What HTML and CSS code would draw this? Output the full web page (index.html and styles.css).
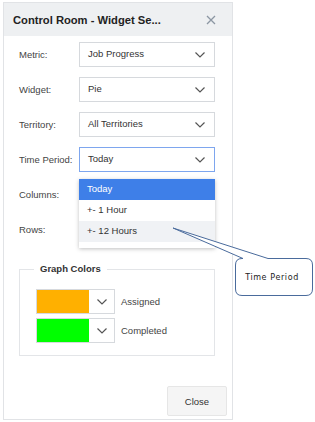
FILE: index.html
```html
<!DOCTYPE html>
<html lang="en">
<head>
  <meta charset="UTF-8">
  <meta name="viewport" content="width=device-width, initial-scale=1">
  <title>Control Room - Widget Settings</title>
  <link rel="stylesheet" href="styles.css">
</head>
<body>

  <div class="dialog">
    <div class="dialog-header">
      <span class="dialog-title">Control Room - Widget Se...</span>
      <svg class="close-icon" width="10" height="10" viewBox="0 0 10 10">
        <path d="M1 1 L9 9 M9 1 L1 9" stroke="#8c96a3" stroke-width="1.3" fill="none"/>
      </svg>
    </div>

    <div class="dialog-body">
      <div class="field">
        <label>Metric:</label>
        <div class="select">
          <span>Job Progress</span>
          <svg class="chevron" width="10" height="6" viewBox="0 0 10 6"><path d="M0.5 0.5 L5 5 L9.5 0.5" stroke="#555" stroke-width="1.2" fill="none"/></svg>
        </div>
      </div>

      <div class="field">
        <label>Widget:</label>
        <div class="select">
          <span>Pie</span>
          <svg class="chevron" width="10" height="6" viewBox="0 0 10 6"><path d="M0.5 0.5 L5 5 L9.5 0.5" stroke="#555" stroke-width="1.2" fill="none"/></svg>
        </div>
      </div>

      <div class="field">
        <label>Territory:</label>
        <div class="select">
          <span>All Territories</span>
          <svg class="chevron" width="10" height="6" viewBox="0 0 10 6"><path d="M0.5 0.5 L5 5 L9.5 0.5" stroke="#555" stroke-width="1.2" fill="none"/></svg>
        </div>
      </div>

      <div class="field">
        <label>Time Period:</label>
        <div class="select open">
          <span>Today</span>
          <svg class="chevron" width="10" height="6" viewBox="0 0 10 6"><path d="M0.5 0.5 L5 5 L9.5 0.5" stroke="#555" stroke-width="1.2" fill="none"/></svg>
          <ul class="dropdown">
            <li class="selected">Today</li>
            <li>+- 1 Hour</li>
            <li class="hover">+- 12 Hours</li>
          </ul>
        </div>
      </div>

      <div class="field">
        <label>Columns:</label>
        <div class="select"></div>
      </div>

      <div class="field">
        <label>Rows:</label>
        <div class="select"></div>
      </div>

      <fieldset class="colors">
        <legend>Graph Colors</legend>
        <div class="color-row">
          <div class="picker">
            <div class="swatch orange"></div>
            <div class="picker-btn">
              <svg width="10" height="6" viewBox="0 0 10 6"><path d="M0.5 0.5 L5 5 L9.5 0.5" stroke="#555" stroke-width="1.2" fill="none"/></svg>
            </div>
          </div>
          <span>Assigned</span>
        </div>
        <div class="color-row">
          <div class="picker">
            <div class="swatch green"></div>
            <div class="picker-btn">
              <svg width="10" height="6" viewBox="0 0 10 6"><path d="M0.5 0.5 L5 5 L9.5 0.5" stroke="#555" stroke-width="1.2" fill="none"/></svg>
            </div>
          </div>
          <span>Completed</span>
        </div>
      </fieldset>
    </div>

    <div class="dialog-footer">
      <button class="btn">Close</button>
    </div>
  </div>

  <!-- annotation bubble -->
  <svg class="callout" width="315" height="300" viewBox="0 0 315 300">
    <path d="M243 258.5 L173 228 L268 258.5 L306 258.5 Q312.5 258.5 312.5 265 L312.5 289 Q312.5 295.5 306 295.5 L242 295.5 Q235.5 295.5 235.5 289 L235.5 265 Q235.5 258.5 242 258.5 Z"
          fill="#fff" stroke="#4a6b9c" stroke-width="1"/>
    <text x="272" y="280" text-anchor="middle" class="callout-text">Time Period</text>
  </svg>

</body>
</html>
```

FILE: styles.css
```css
body {
  margin: 0;
  padding: 0;
  background-color: #fff;
  font-family: 'Liberation Sans', Arial, sans-serif;
  color: #333;
  position: relative;
}

.dialog {
  margin: 2px 0 0 3px;
  width: 230px;
  height: 418px;
  box-sizing: border-box;
  border: 1px solid #e1e3e6;
  background-color: #fff;
  display: flex;
  flex-direction: column;
}

.dialog-header {
  height: 33px;
  background-color: #eef0f2;
  display: flex;
  align-items: center;
  justify-content: space-between;
  padding: 0 16px 0 9px;
  flex-shrink: 0;
}

.dialog-title {
  font-size: 11.2px;
  font-weight: bold;
  color: #222;
}

.close-icon {
  display: block;
}

.dialog-body {
  padding: 6px 17px 0 15px;
}

.field {
  display: flex;
  align-items: center;
  height: 25px;
  margin-bottom: 10px;
}

.field:last-of-type {
  margin-bottom: 0;
}

label {
  width: 60px;
  flex-shrink: 0;
  font-size: 9.5px;
  color: #444;
}

.select {
  position: relative;
  flex: 1;
  height: 25px;
  box-sizing: border-box;
  border: 1px solid #d6d9dd;
  display: flex;
  align-items: center;
  justify-content: space-between;
  padding: 0 9px 0 8px;
  font-size: 9.5px;
  color: #333;
  background-color: #fff;
}

.select span {
  margin-top: -3px;
}

.select.open {
  border-color: #7ea6ee;
}

.chevron {
  display: block;
}

.dropdown {
  position: absolute;
  left: -1px;
  right: -1px;
  top: 31px;
  margin: 0;
  padding: 0 0 6px 0;
  list-style: none;
  background-color: #fff;
  box-shadow: 0 1px 4px rgba(0, 0, 0, 0.25);
  z-index: 5;
}

.dropdown li {
  height: 21px;
  line-height: 20px;
  padding-left: 8px;
  font-size: 9.5px;
  color: #333;
}

.dropdown li.selected {
  background-color: #3e7fe8;
  color: #fff;
}

.dropdown li.hover {
  background-color: #f0f2f5;
}

.colors {
  margin: 21px 0 0 0;
  padding: 14px 10px 12px 16px;
  border: 1px solid #e3e5e8;
  min-width: 0;
}

.colors legend {
  margin-left: -2px;
  padding: 0 6px;
  font-size: 9.5px;
  line-height: 12px;
  font-weight: bold;
  color: #333;
}

.color-row {
  display: flex;
  align-items: center;
  gap: 6px;
  font-size: 9.5px;
  color: #444;
  margin-top: 4px;
}

.color-row:first-of-type {
  margin-top: 0;
}

.picker {
  display: flex;
  height: 25px;
  width: 79px;
  box-sizing: border-box;
  border: 1px solid #d6d9dd;
}

.swatch {
  width: 52px;
  height: 100%;
}

.swatch.orange {
  background-color: #ffb000;
}

.swatch.green {
  background-color: #00ff00;
}

.picker-btn {
  flex: 1;
  display: flex;
  align-items: center;
  justify-content: center;
  background-color: #fff;
}

.picker-btn svg {
  display: block;
}

.dialog-footer {
  margin-top: auto;
  display: flex;
  justify-content: flex-end;
  padding: 0 5px 3px 0;
}

.btn {
  width: 60px;
  height: 30px;
  background-color: #f5f5f5;
  border: 1px solid #e6e6e6;
  border-radius: 2px;
  font-family: 'Liberation Sans', Arial, sans-serif;
  font-size: 9.5px;
  color: #333;
  cursor: pointer;
}

.callout {
  position: absolute;
  left: 0;
  top: 0;
  z-index: 10;
  pointer-events: none;
}

.callout-text {
  font-family: 'DejaVu Sans', sans-serif;
  font-size: 8px;
  letter-spacing: 0.6px;
  fill: #222;
}
```
